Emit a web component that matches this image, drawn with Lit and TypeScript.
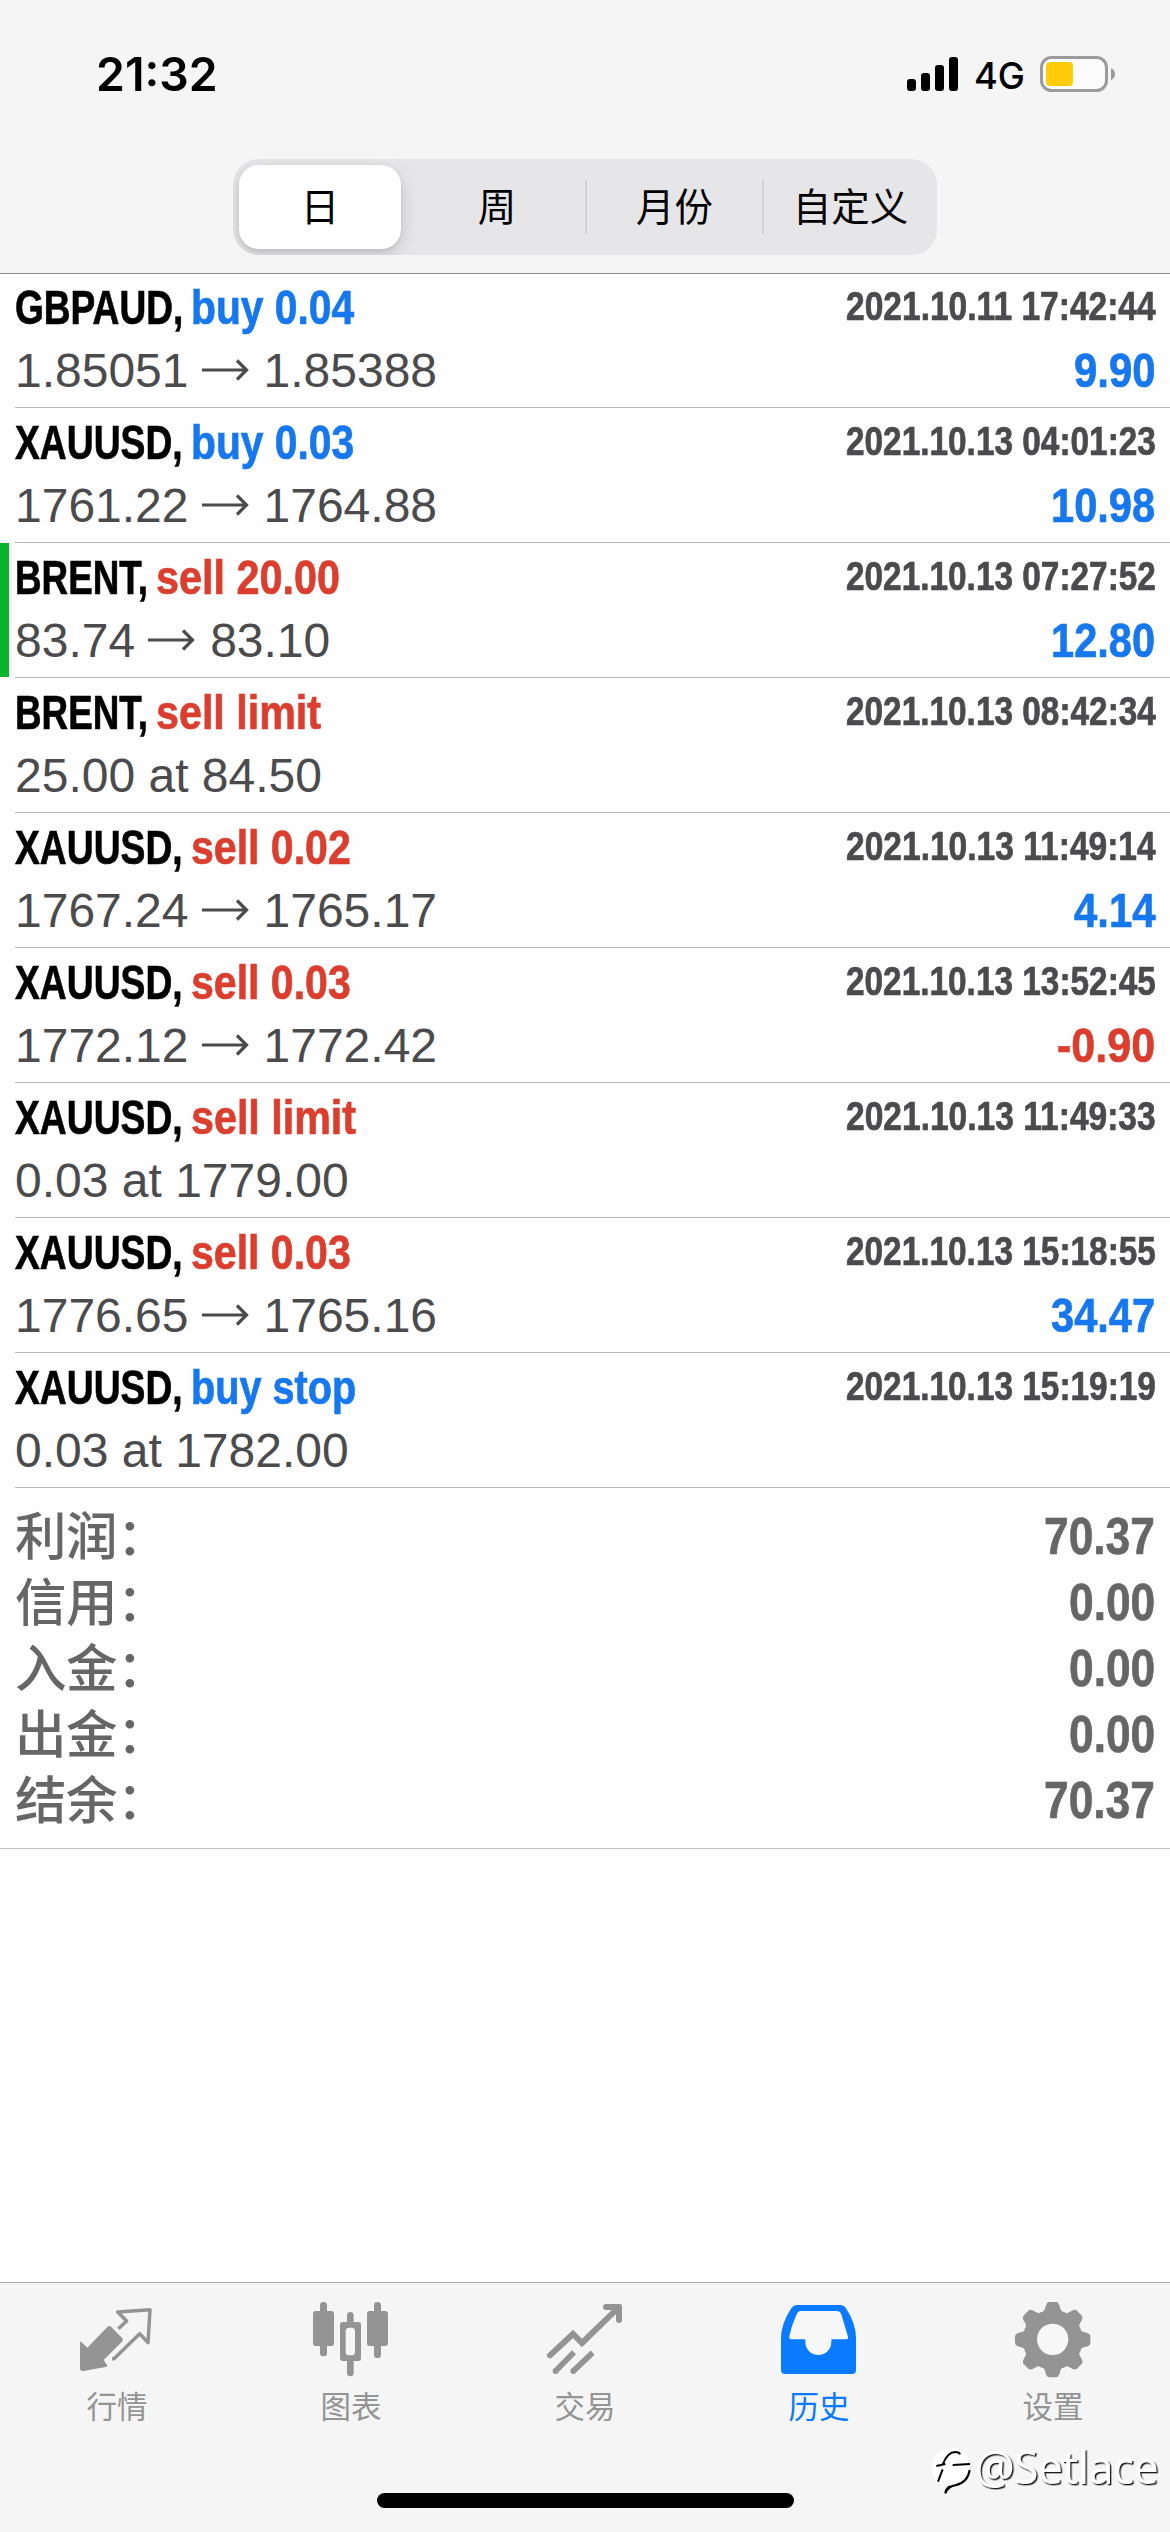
import { LitElement, html, svg, css, nothing } from "lit";
import { customElement, property, query } from "lit/decorators.js";

type Side = "buy" | "sell";

interface Deal {
  symbol: string;
  symbolWidth: number;
  side: Side;
  action: string;
  actionWidth: number;
  time: string;
  from?: string;
  to?: string;
  order?: string;
  profit?: string;
  marked?: boolean;
}

const XAU = { symbol: "XAUUSD,", symbolWidth: 168 };
const BRENT = { symbol: "BRENT,", symbolWidth: 133 };

const DEALS: Deal[] = [
  { symbol: "GBPAUD,", symbolWidth: 168, side: "buy", action: "buy 0.04", actionWidth: 163, time: "2021.10.11 17:42:44", from: "1.85051", to: "1.85388", profit: "9.90" },
  { ...XAU, side: "buy", action: "buy 0.03", actionWidth: 163, time: "2021.10.13 04:01:23", from: "1761.22", to: "1764.88", profit: "10.98" },
  { ...BRENT, side: "sell", action: "sell 20.00", actionWidth: 184, time: "2021.10.13 07:27:52", from: "83.74", to: "83.10", profit: "12.80", marked: true },
  { ...BRENT, side: "sell", action: "sell limit", actionWidth: 165, time: "2021.10.13 08:42:34", order: "25.00 at 84.50" },
  { ...XAU, side: "sell", action: "sell 0.02", actionWidth: 160, time: "2021.10.13 11:49:14", from: "1767.24", to: "1765.17", profit: "4.14" },
  { ...XAU, side: "sell", action: "sell 0.03", actionWidth: 160, time: "2021.10.13 13:52:45", from: "1772.12", to: "1772.42", profit: "-0.90" },
  { ...XAU, side: "sell", action: "sell limit", actionWidth: 165, time: "2021.10.13 11:49:33", order: "0.03 at 1779.00" },
  { ...XAU, side: "sell", action: "sell 0.03", actionWidth: 160, time: "2021.10.13 15:18:55", from: "1776.65", to: "1765.16", profit: "34.47" },
  { ...XAU, side: "buy", action: "buy stop", actionWidth: 165, time: "2021.10.13 15:19:19", order: "0.03 at 1782.00" },
];

const TOTALS = [
  ["利润：", "70.37"],
  ["信用：", "0.00"],
  ["入金：", "0.00"],
  ["出金：", "0.00"],
  ["结余：", "70.37"],
];

/** Advance width of a number set in the condensed bold face. */
const numberWidth = (value: string, digit: number) =>
  [...value].reduce((sum, ch) => sum + (ch === "." ? digit * 0.5 : ch === "-" ? digit * 0.74 : digit), 0);

/** A line of text squeezed horizontally to a given width. */
@customElement("condensed-text")
export class CondensedText extends LitElement {
  @property() text = "";
  @property({ type: Number }) width = 0;
  @query(".text") private textEl!: HTMLElement;

  static styles = css`
    :host {
      display: block;
      flex: none;
    }
    .box {
      display: flex;
    }
    .text {
      flex: none;
      white-space: pre;
      transform-origin: 0 0;
    }
  `;

  updated() {
    const natural = this.textEl.offsetWidth;
    if (natural > 0) {
      this.textEl.style.transform = `scaleX(${this.width / natural})`;
    }
  }

  render() {
    return html`<div class="box" style="width:${this.width}px"><div class="text">${this.text}</div></div>`;
  }
}

const run = (text: string, width: number, cls: string) =>
  html`<condensed-text class="run ${cls}" .text=${text} .width=${width}></condensed-text>`;

const arrow = html`
  <svg class="arrow" width="48" height="63" viewBox="0 0 48 63">
    <path d="M0 25H44M35 15.5L44.5 25L35 34.5" />
  </svg>
`;

const gearTeeth = [0, 45, 90, 135, 180, 225, 270, 315].map(
  (angle) => svg`<path transform="rotate(${angle} 848 239)"
    d="M812 165 Q822 158 826 143 Q829 126 838 126 H858 Q867 126 870 143 Q874 158 884 165Z" />`
);

const TABS = [
  {
    label: "行情",
    x: 216,
    icon: svg`
      <path class="fill" d="M240 246Q242 244 245 247L262 263L322 201Q328 195 334 201L367 235Q371 240 366 245L311 300L321 315Q324 320 317 321L250 333Q240 334 240 325Z" />
      <path class="line" stroke-width="10.5" stroke-linejoin="round" d="M355 206L380 183L353 156L450 149L444 248L419 221L342 296H336" />`,
  },
  {
    label: "图表",
    x: 918,
    icon: svg`
      <rect class="fill" x="960" y="126" width="21" height="163" rx="10" />
      <rect class="fill" x="939" y="153" width="63" height="105" rx="8" />
      <rect class="fill" x="1122" y="126" width="21" height="168" rx="10" />
      <rect class="fill" x="1101" y="153" width="63" height="105" rx="8" />
      <rect class="fill" x="1041" y="156" width="20" height="50" rx="10" />
      <rect class="fill" x="1041" y="280" width="20" height="69" rx="10" />
      <rect class="fill" x="1020" y="186" width="63" height="117" rx="8" />
      <rect class="hole" x="1037" y="203" width="28" height="83" rx="11" />`,
  },
  {
    label: "交易",
    x: 420,
    icon: svg`
      <path class="line" stroke-width="18" stroke-linecap="round" d="M450 286L519 222L546 249L652 146M618 141H655M657 141V180" />
      <path class="line" stroke-width="17" d="M466 334L522 277M519 334L578 278" />
      <circle class="fill" cx="467" cy="333" r="9" /><circle class="fill" cx="520" cy="333" r="9" />
      <path class="fill" d="M640 132H658Q666 132 666 142V155Z" />`,
  },
  {
    label: "历史",
    x: 12,
    active: true,
    icon: svg`
      <path class="fill" d="M80 135H212Q222 135 227 143Q258 190 258 235V330Q258 342 246 342H45Q33 342 33 330V235Q33 190 65 143Q70 135 80 135Z" />
      <path class="hole" d="M93 153H199Q210 153 214 163L234 230Q235 238 227 238H184V246A39 39 0 0 1 106 246V238H64Q56 237 58 228Q65 195 80 163Q84 153 93 153Z" />`,
  },
  {
    label: "设置",
    x: 714,
    icon: svg`
      <g class="fill"><circle cx="848" cy="239" r="90" />${gearTeeth}</g>
      <circle class="hole" cx="848" cy="238" r="47" />`,
  },
];

@customElement("app-root")
export class AppRoot extends LitElement {
  static styles = css`
    :host {
      display: block;
    }
    .screen {
      position: relative;
      display: flex;
      flex-direction: column;
      width: 1170px;
      height: 2532px;
      overflow: hidden;
      background: #fefefe;
      font-family: "Liberation Sans", "Noto Sans CJK SC", sans-serif;
    }
    svg {
      display: block;
      flex: none;
      overflow: visible;
    }

    .header {
      flex: none;
      display: flex;
      flex-direction: column;
      height: 273px;
      background: #f5f5f5;
      box-shadow: 0 1px 0 #8c8c8e;
    }
    .status {
      display: flex;
      justify-content: space-between;
      height: 159px;
      padding: 0 54px 0 96px;
    }
    .network {
      font: 500 37px Inter, sans-serif;
    }
    .segments {
      align-self: center;
      display: grid;
      grid-template-columns: 176px 178px 177px 1fr;
      box-sizing: border-box;
      width: 704px;
      height: 96px;
      border-radius: 26px;
      background: #e6e6e8;
      overflow: hidden;
    }
    .segment {
      display: flex;
      align-items: center;
      justify-content: center;
      margin: 21px 0;
      padding-bottom: 5px;
      border-right: 2px solid #d2d2d5;
      font: 400 38.5px "Noto Sans CJK SC", sans-serif;
      line-height: 49px;
      color: #000;
    }
    .segment:last-child {
      border-right: 0;
    }
    .segment.selected {
      margin: 6px 8px 6px 6px;
      border: 0;
      border-radius: 20px;
      background: #fff;
      box-shadow: 0 6px 18px rgba(0, 0, 0, 0.14), 0 2px 4px rgba(0, 0, 0, 0.08);
    }

    .deal {
      flex: none;
      display: flex;
      gap: 6px;
      height: 135px;
    }
    .marker {
      width: 9px;
      height: 134px;
    }
    .marked .marker {
      background: #0cb42c;
    }
    .body {
      flex: 1;
      box-sizing: border-box;
      padding: 9px 15px 0 0;
      border-bottom: 1px solid #bababc;
    }
    .line-row {
      display: flex;
      height: 63px;
    }
    .spacer {
      flex: 1;
    }
    .run {
      font-weight: 700;
      font-size: 49px;
      line-height: 50px;
      -webkit-text-stroke: 0.7px currentColor;
    }
    .symbol {
      margin-right: 8px;
      color: #000;
    }
    .buy {
      color: #1677ee;
    }
    .sell {
      color: #db3e2e;
    }
    .time {
      font-size: 40px;
      line-height: 48px;
      color: #4b4b4d;
    }
    .total {
      font-size: 52px;
      line-height: 66px;
      color: #666;
    }
    .clock {
      font-family: Inter, sans-serif;
      font-weight: 600;
      font-size: 46px;
      line-height: 149px;
      color: #000;
      -webkit-text-stroke: 0;
    }
    .price {
      font-size: 48px;
      line-height: 51px;
      color: #4b4b4d;
      white-space: pre;
    }
    .arrow {
      margin: 0 14px 0 13px;
      fill: none;
      stroke: #4b4b4d;
      stroke-width: 3.2;
    }

    .totals {
      flex: none;
      padding: 15px;
      border-bottom: 1px solid #c4c4c6;
    }
    .total-row {
      display: flex;
      justify-content: space-between;
      height: 66px;
    }
    .total-label {
      font: 500 51.5px "Noto Sans CJK SC", sans-serif;
      line-height: 60px;
      letter-spacing: -0.5px;
      color: #666;
    }

    .tabbar {
      flex: none;
      display: grid;
      grid-template-columns: repeat(5, 1fr);
      box-sizing: border-box;
      height: 250px;
      margin-top: auto;
      padding-top: 17px;
      border-top: 1px solid #aaaaac;
      background: #f5f5f5;
    }
    .tab {
      display: flex;
      flex-direction: column;
      align-items: center;
      color: #949494;
    }
    .tab.active {
      color: #0a7aff;
    }
    .tab-label {
      margin-top: 3px;
      font: 400 30.5px "Noto Sans CJK SC", sans-serif;
      line-height: 44px;
    }
    .fill {
      fill: currentColor;
    }
    .line {
      fill: none;
      stroke: currentColor;
    }
    .hole {
      fill: #f7f7f7;
    }
    .home {
      position: absolute;
      left: 377px;
      top: 2493px;
      width: 417px;
      height: 15px;
      border-radius: 8px;
      background: #000;
    }
    .watermark {
      position: absolute;
      left: 920px;
      top: 2430px;
    }
    .watermark text {
      font-family: "Noto Sans", "Open Sans", sans-serif;
      font-size: 134px;
      font-weight: 400;
      fill: #fff;
      filter: drop-shadow(4px 4px 0 #1a1a1a);
    }
  `;

  private renderDeal(deal: Deal) {
    return html`
      <div class="deal ${deal.marked ? "marked" : ""}">
        <div class="marker"></div>
        <div class="body">
          <div class="line-row">
            ${run(deal.symbol, deal.symbolWidth, "symbol")}
            ${run(deal.action, deal.actionWidth, deal.side)}
            <div class="spacer"></div>
            ${run(deal.time, 309.5, "time")}
          </div>
          <div class="line-row">
            ${deal.order
              ? html`<div class="price">${deal.order}</div>`
              : html`<div class="price">${deal.from}</div>${arrow}<div class="price">${deal.to}</div>`}
            <div class="spacer"></div>
            ${deal.profit
              ? run(deal.profit, numberWidth(deal.profit, 23.2), deal.profit.startsWith("-") ? "sell" : "buy")
              : nothing}
          </div>
        </div>
      </div>
    `;
  }

  render() {
    return html`
      <div class="screen">
        <div class="header">
          <div class="status">
            ${run("21:32", 122, "clock")}
            <svg width="210" height="110" viewBox="906 0 210 110">
              <rect x="907" y="79" width="9" height="12" rx="3" />
              <rect x="921" y="73" width="9" height="18" rx="3" />
              <rect x="935" y="65" width="9" height="26" rx="3" />
              <rect x="949" y="57" width="9" height="34" rx="3" />
              <text class="network" x="974" y="89" textLength="51" lengthAdjust="spacingAndGlyphs">4G</text>
              <rect x="1041.5" y="57.5" width="65" height="33" rx="10" fill="#fbfbfb" stroke="#9b9b9b" stroke-width="3" />
              <rect x="1046" y="62" width="27" height="24" rx="4" fill="#ffcc0a" />
              <path d="M1111 68Q1115 70 1115 74Q1115 78 1111 80Z" fill="#9b9b9b" />
            </svg>
          </div>
          <div class="segments">
            <div class="segment selected">日</div>
            <div class="segment">周</div>
            <div class="segment">月份</div>
            <div class="segment">自定义</div>
          </div>
        </div>

        ${DEALS.map((deal) => this.renderDeal(deal))}

        <div class="totals">
          ${TOTALS.map(
            ([label, value]) => html`
              <div class="total-row">
                <div class="total-label">${label}</div>
                ${run(value, numberWidth(value, 24.6), "total")}
              </div>
            `
          )}
        </div>

        <div class="tabbar">
          ${TABS.map(
            (tab) => html`
              <div class="tab ${tab.active ? "active" : ""}">
                <svg width="90" height="80" viewBox="${tab.x} 120 270 240">${tab.icon}</svg>
                <div class="tab-label">${tab.label}</div>
              </div>
            `
          )}
        </div>

        <div class="home"></div>

        <svg class="watermark" width="250" height="80" viewBox="0 0 750 240">
          <circle cx="92" cy="112" r="58" fill="#fff" />
          <g fill="none" stroke="#000" stroke-width="6">
            <path d="M49 108L76 102M68 104Q82 66 106 66Q116 66 121 72M98 105L150 102M149 120Q143 158 106 166Q86 168 76 190Q76 178 90 168M68 118L54 155" />
          </g>
          <text x="164" y="162" textLength="552">@Setlace</text>
        </svg>
      </div>
    `;
  }
}
